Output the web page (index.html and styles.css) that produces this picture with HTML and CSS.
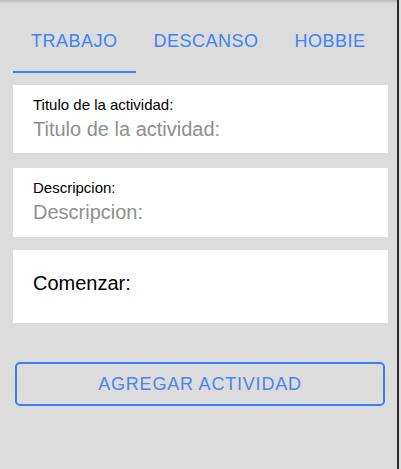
FILE: index.html
```html
<!DOCTYPE html>
<html lang="es">
<head>
<meta charset="utf-8">
<title>Actividades</title>
<link rel="stylesheet" href="styles.css">
</head>
<body>
<div class="page">
  <nav class="tabs">
    <div class="tab active">TRABAJO</div>
    <div class="tab">DESCANSO</div>
    <div class="tab">HOBBIE</div>
  </nav>
  <div class="card field">
    <label class="label">Titulo de la actividad:</label>
    <div class="placeholder">Titulo de la actividad:</div>
  </div>
  <div class="card field second">
    <label class="label">Descripcion:</label>
    <div class="placeholder">Descripcion:</div>
  </div>
  <div class="card start">Comenzar:</div>
  <button class="add">AGREGAR ACTIVIDAD</button>
</div>
</body>
</html>
```
FILE: styles.css
```css
html, body {
  margin: 0;
  padding: 0;
  height: 100%;
}
body {
  background: #dcdcdc;
  font-family: "Liberation Sans", Arial, sans-serif;
  overflow: hidden;
}
.page {
  position: relative;
  height: 469px;
  width: 399px;
  border-right: 2px solid #2b2b2b;
  padding: 0 9px 0 13px;
  box-sizing: border-box;
  background: linear-gradient(to bottom, #b9b9b9 0, #cfcfcf 2px, #dcdcdc 4px);
}
.tabs {
  display: flex;
}
.tab {
  padding: 31px 18px 19px;
  font-size: 18px;
  line-height: 21px;
  letter-spacing: 0.5px;
  color: #3f83f8;
  border-bottom: 2px solid transparent;
  white-space: nowrap;
}
.tab.active {
  border-bottom-color: #3880ff;
}
.card {
  background: #fff;
}
.field {
  margin-top: 12px;
  display: flex;
  flex-direction: column;
  padding: 11px 20px 12px;
}
.field.second {
  margin-top: 15px;
  padding-bottom: 13px;
}
.label {
  font-size: 15px;
  line-height: 17px;
  color: #000;
}
.placeholder {
  margin-top: 5px;
  font-size: 20px;
  line-height: 23px;
  color: #8f8f8f;
}
.start {
  margin-top: 13px;
  padding: 22px 20px 28px;
  font-size: 20px;
  line-height: 23px;
  color: #000;
}
.add {
  display: block;
  margin: 39px 0 0 2px;
  width: 370px;
  height: 44px;
  border: 2px solid #3880ff;
  border-radius: 5px;
  background: transparent;
  color: #4a84f2;
  font-family: "Liberation Sans", Arial, sans-serif;
  font-size: 18px;
  letter-spacing: 0.8px;
  padding: 0;
}
```
